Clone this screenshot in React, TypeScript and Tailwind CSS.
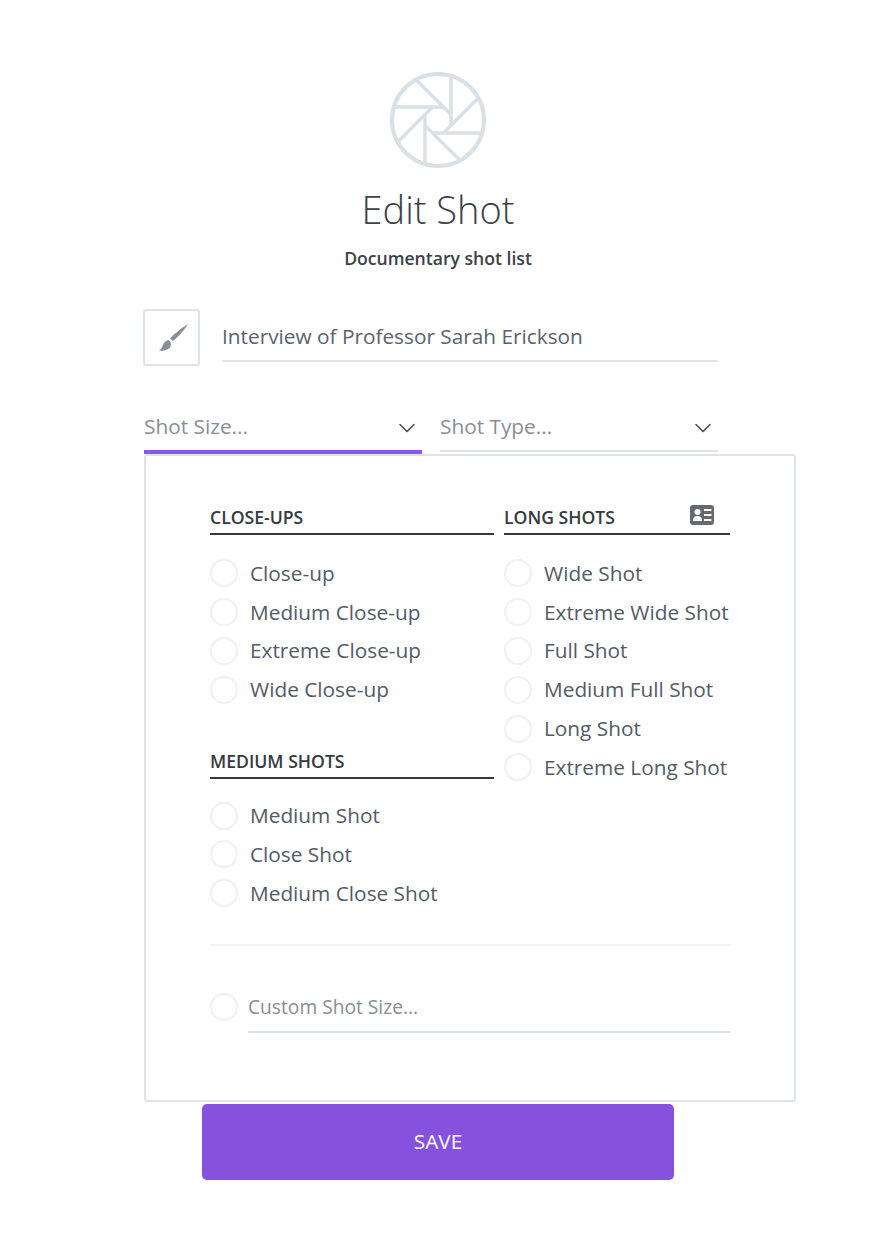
import { ChevronDown } from "lucide-react";

const closeUps = ["Close-up", "Medium Close-up", "Extreme Close-up", "Wide Close-up"];
const mediumShots = ["Medium Shot", "Close Shot", "Medium Close Shot"];
const longShots = [
  "Wide Shot",
  "Extreme Wide Shot",
  "Full Shot",
  "Medium Full Shot",
  "Long Shot",
  "Extreme Long Shot",
];

function Shutter() {
  return (
    <svg width="96" height="96" viewBox="-48 -48 96 96" fill="none" stroke="#d9e0e6">
      <circle r="46" strokeWidth="4" />
      {[0, 45, 90, 135, 180, 225, 270, 315].map((angle) => (
        <line key={angle} x1="13" y1="-44" x2="13" y2="5" strokeWidth="3.5" transform={`rotate(${angle})`} />
      ))}
    </svg>
  );
}

function Brush() {
  return (
    <svg width="30" height="27" viewBox="0 0 30 27" fill="#868e96">
      <path d="M29 0 C23.5 3.5 15.5 9.5 11 14.5 L14 17 C19.5 12.5 25.5 6 29 0 Z" />
      <path d="M9.5 16 C6.5 16.5 5 18.5 4 21 C3.2 23.5 2 25.5 0 26.5 C3 27 9.5 26.8 11.5 22.5 C12.5 20.5 12 17.5 9.5 16 Z" />
    </svg>
  );
}

function IdCard() {
  return (
    <svg width="24" height="20" viewBox="0 0 24 20">
      <rect width="24" height="20" rx="3" fill="#666a6e" />
      <circle cx="7.5" cy="7" r="3" fill="#fff" />
      <path d="M3 16 C3 12 5 11 7.5 11 C10 11 12 12 12 16 Z" fill="#fff" />
      <path d="M14 5 H21.5 M14 10 H21.5 M14 15 H21.5" stroke="#fff" strokeWidth="2" />
    </svg>
  );
}

function Radio({ label }: { label: string }) {
  return (
    <div className="flex h-[38.8px] items-center gap-3">
      <span className="h-[28px] w-[28px] shrink-0 rounded-full border-2 border-[#eff1f3]" />
      <span className="text-[20.8px] whitespace-nowrap text-[#525b66]">{label}</span>
    </div>
  );
}

function SectionTitle({ title }: { title: string }) {
  return (
    <div className="h-[32px] border-b-2 border-[#343a40] text-[17.6px] leading-[28px] font-semibold text-[#343a40]">
      {title}
    </div>
  );
}

export default function App() {
  return (
    <div className="min-h-[1242px] bg-white pt-[72px] pl-[144px] font-['Open_Sans',sans-serif]">
      <div className="w-[588px]">
        <div className="flex flex-col items-center">
          <Shutter />
          <h1 className="mt-[14px] text-[38px] leading-[54px] font-light text-[#3c4247]">Edit Shot</h1>
          <p className="mt-[10px] text-[17.6px] leading-[24px] font-semibold text-[#3c4247]">Documentary shot list</p>
        </div>

        <div className="mt-[39px] -ml-px flex items-start gap-[22px]">
          <div className="flex h-[57px] w-[57px] shrink-0 items-center justify-center rounded-[3px] border-2 border-[#dee3e8] pl-[5px]">
            <Brush />
          </div>
          <div className="h-[53px] w-[496px] border-b-2 border-[#dee3e8] pt-[10px] text-[20.8px] leading-[34px] text-[#5a636d]">
            Interview of Professor Sarah Erickson
          </div>
        </div>

        <div className="mt-[32px] flex gap-[18px]">
          <div className="flex h-[56px] w-[278px] items-start justify-between border-b-4 border-[#8b55e8] pt-[11px] pr-[1px]">
            <span className="text-[20.8px] leading-[34px] text-[#868e96]">Shot Size...</span>
            <ChevronDown className="mt-[5px] h-[28px] w-[28px] text-[#495057]" strokeWidth={1.4} />
          </div>
          <div className="flex h-[54px] w-[278px] items-start justify-between border-b-2 border-[#dee3e8] pt-[11px] pr-[1px]">
            <span className="text-[20.8px] leading-[34px] text-[#868e96]">Shot Type...</span>
            <ChevronDown className="mt-[5px] h-[28px] w-[28px] text-[#495057]" strokeWidth={1.4} />
          </div>
        </div>

        <div className="h-[648px] w-[652px] rounded-[3px] border-2 border-[#dee3e8] px-[64px] pt-[47px]">
          <div className="flex gap-[10px]">
            <div className="w-[284px]">
              <SectionTitle title="CLOSE-UPS" />
              <div className="mt-[19px]">
                {closeUps.map((label) => (
                  <Radio key={label} label={label} />
                ))}
              </div>
              <div className="mt-[38px]">
                <SectionTitle title="MEDIUM SHOTS" />
              </div>
              <div className="mt-[17px]">
                {mediumShots.map((label) => (
                  <Radio key={label} label={label} />
                ))}
              </div>
            </div>
            <div className="w-[226px]">
              <div className="relative">
                <SectionTitle title="LONG SHOTS" />
                <span className="absolute top-[2px] right-[16px] block h-[20px] w-[24px]">
                  <IdCard />
                </span>
              </div>
              <div className="mt-[19px]">
                {longShots.map((label) => (
                  <Radio key={label} label={label} />
                ))}
              </div>
            </div>
          </div>

          <div className="mt-[31.4px] w-[520px] border-t-2 border-[#f1f3f5]" />

          <div className="mt-[31px] flex w-[520px] gap-[10px]">
            <span className="mt-[16px] h-[28px] w-[28px] shrink-0 rounded-full border-2 border-[#eff1f3]" />
            <div className="h-[56px] flex-1 border-b-2 border-[#dee3e8] pt-[15px] text-[19.2px] leading-[30px] text-[#868e96]">
              Custom Shot Size...
            </div>
          </div>
        </div>

        <button className="mx-auto mt-[2px] block h-[76px] w-[472px] rounded-[5px] bg-[#8551dd] text-[20.8px] text-white">
          SAVE
        </button>
      </div>
    </div>
  );
}
